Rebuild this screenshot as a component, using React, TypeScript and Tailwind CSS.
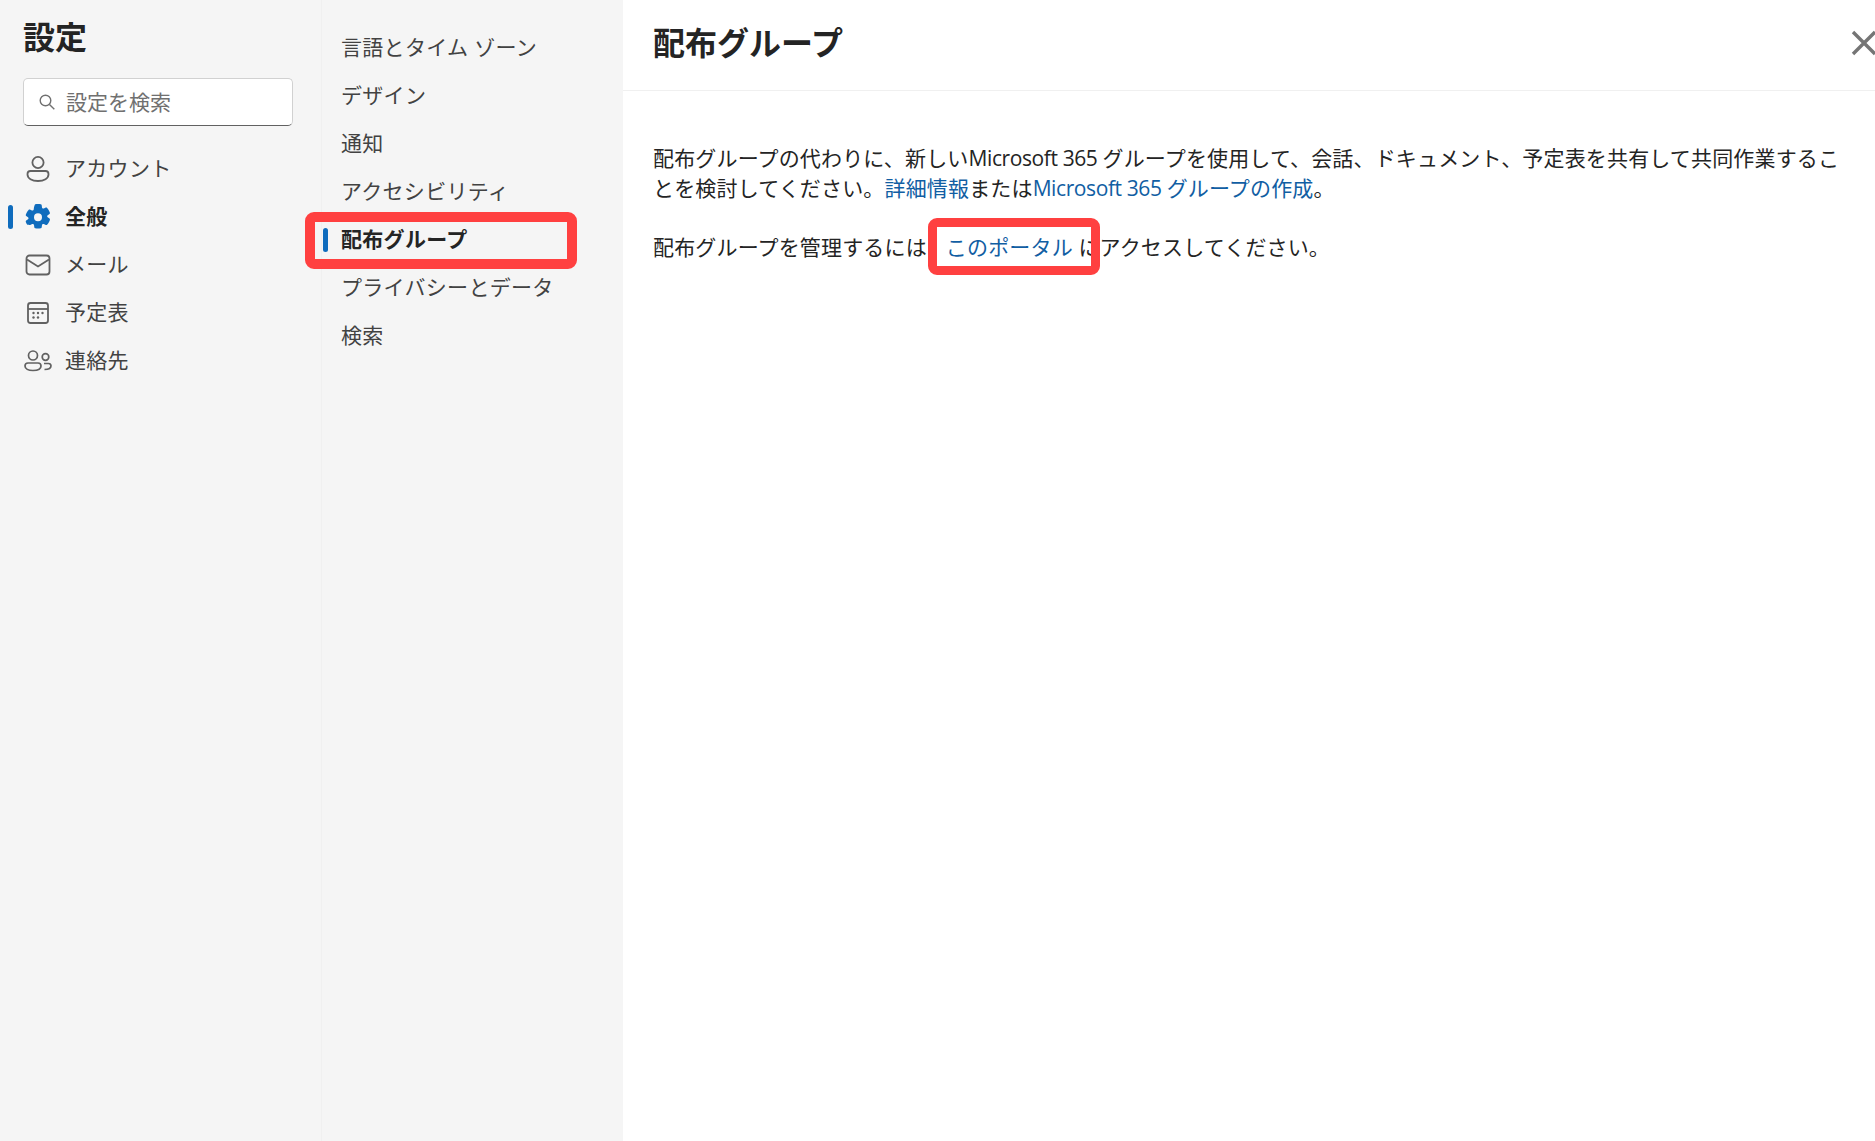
const font = "font-['Open_Sans','Noto_Sans_CJK_JP',sans-serif]";

function PersonIcon() {
  return (
    <svg width="28" height="28" viewBox="0 0 28 28" fill="none" stroke="#616161" strokeWidth="1.8">
      <circle cx="14" cy="7.5" r="5.6" />
      <path d="M6.5 16h15a3 3 0 0 1 3 3v.5c0 3.8-4.4 6.5-10.5 6.5S3.500 23.300 3.500 19.500V19a3 3 0 0 1 3-3z" />
    </svg>
  );
}
function GearIcon() {
  return (
    <svg width="28" height="28" viewBox="0 0 28 28">
      <path
        fill="#0f6cbd"
        fillRule="evenodd"
        d="M11.2 1.300c1.800-.4 3.800-.4 5.600 0 .5.100.8.500.9 1l.3 2.200c.1.800 1 1.300 1.800 1l2-.9c.5-.2 1-.1 1.300.3 1.300 1.300 2.200 3 2.800 4.800.1.500 0 1-.4 1.300l-1.800 1.300c-.7.500-.7 1.500 0 2l1.800 1.300c.4.300.6.800.4 1.300-.6 1.800-1.500 3.500-2.800 4.800-.3.400-.8.500-1.300.3l-2-.9c-.8-.3-1.700.2-1.800 1l-.3 2.200c-.1.500-.4.900-.9 1-1.800.4-3.800.4-5.600 0-.5-.1-.8-.5-.9-1l-.3-2.200c-.1-.8-1-1.300-1.800-1l-2 .9c-.5.200-1 .1-1.300-.3C3.300 22.400 2.400 20.700 1.800 18.900c-.2-.5 0-1 .4-1.300L4 16.300c.7-.5.7-1.500 0-2l-1.800-1.300c-.4-.3-.5-.8-.4-1.300C2.400 9.900 3.300 8.200 4.600 6.900c.3-.4.800-.5 1.300-.3l2 .9c.8.300 1.700-.2 1.800-1l.3-2.200c.1-.5.700-2.500 1.200-3zM14 10.300a4 4 0 1 0 0 8 4 4 0 0 0 0-8z"
      />
    </svg>
  );
}
function MailIcon() {
  return (
    <svg width="28" height="28" viewBox="0 0 28 28" fill="none" stroke="#616161" strokeWidth="1.8">
      <rect x="2.500" y="4.500" width="23" height="19" rx="3" />
      <path d="M3 8.500l11 7 11-7" />
    </svg>
  );
}
function CalendarIcon() {
  return (
    <svg width="28" height="28" viewBox="0 0 28 28" fill="none" stroke="#616161" strokeWidth="1.800">
      <rect x="4" y="4" width="20" height="20" rx="2.500" />
      <path d="M4 10h20" />
      <g fill="#616161" stroke="none">
        <circle cx="9.500" cy="14" r="1.200" />
        <circle cx="14" cy="14" r="1.200" />
        <circle cx="18.500" cy="14" r="1.200" />
        <circle cx="9.500" cy="18.500" r="1.200" />
        <circle cx="14" cy="18.500" r="1.200" />
      </g>
    </svg>
  );
}
function ContactsIcon() {
  return (
    <svg width="28" height="28" viewBox="0 0 28 28" fill="none" stroke="#616161" strokeWidth="1.700">
      <circle cx="9" cy="8.500" r="4.500" />
      <path d="M4 16h10a3 3 0 0 1 3 3c0 3-3.200 4.500-8 4.500S1 22 1 19a3 3 0 0 1 3-3z" />
      <circle cx="21.500" cy="10" r="3.300" />
      <path d="M20 16.500h4.500a2.500 2.500 0 0 1 2.500 2.300c0 2.200-2.200 3.700-6.500 3.700" />
    </svg>
  );
}

const primary = [
  { label: "アカウント", icon: <PersonIcon /> },
  { label: "全般", icon: <GearIcon />, active: true },
  { label: "メール", icon: <MailIcon /> },
  { label: "予定表", icon: <CalendarIcon /> },
  { label: "連絡先", icon: <ContactsIcon /> },
];

const secondary = [
  { label: "言語とタイム ゾーン" },
  { label: "デザイン" },
  { label: "通知" },
  { label: "アクセシビリティ" },
  { label: "配布グループ", active: true },
  { label: "プライバシーとデータ" },
  { label: "検索" },
];

export default function App() {
  return (
    <div className={`relative flex h-[1141px] w-[1875px] overflow-hidden bg-white text-[21px] ${font}`}>
      <aside className="flex w-[322px] shrink-0 flex-col border-r border-[#f0f0f0] bg-[#f5f5f5]">
        <h1 className="mt-[16px] ml-[23px] text-[32px] leading-[42px] font-bold text-[#242424]">設定</h1>
        <div className="mt-[20px] ml-[23px] flex h-12 w-[270px] items-center rounded-[5px] border border-[#d1d1d1] border-b-[#616161] bg-white pl-[15px]">
          <svg width="16" height="16" viewBox="0 0 16 16" fill="none" stroke="#707070" strokeWidth="1.400">
            <circle cx="6.500" cy="6.500" r="5.300" />
            <path d="M10.500 10.500l4.800 4.800" />
          </svg>
          <span className="mt-[2px] ml-[11px] text-[#707070]">設定を検索</span>
        </div>
        <nav className="mt-[19px] flex flex-col tracking-[0.3px]">
          {primary.map((item) => (
            <div key={item.label} className="relative flex h-12 items-center pl-6">
              {item.active && <span className="absolute top-3 left-2 h-6 w-[5px] rounded-full bg-[#0f6cbd]" />}
              {item.icon}
              <span className={`ml-[13px] ${item.active ? "font-bold text-[#242424]" : "text-[#424242]"}`}>
                {item.label}
              </span>
            </div>
          ))}
        </nav>
      </aside>

      <div className="flex w-[301px] shrink-0 flex-col bg-[#f5f5f5] pt-[24px] tracking-[0.3px]">
        {secondary.map((item) => (
          <div key={item.label} className="relative flex h-12 items-center pl-[19px]">
            {item.active && <span className="absolute top-3 left-[1px] h-6 w-[5px] rounded-full bg-[#0f6cbd]" />}
            <span className={item.active ? "font-bold text-[#242424]" : "text-[#424242]"}>{item.label}</span>
          </div>
        ))}
      </div>

      <main className="min-w-0 flex-1">
        <header className="flex h-[91px] items-center justify-between border-b border-[#f0f0f0] pb-1 pl-[30px]">
          <h2 className="text-[32px] font-bold text-[#242424]">配布グループ</h2>
          <svg className="mr-[-2px] shrink-0" width="26" height="26" viewBox="0 0 26 26" fill="none" stroke="#757575" strokeWidth="3.400">
            <path d="M2 2l22 22M24 2L2 24" />
          </svg>
        </header>
        <div className="pt-[52px] pr-[30px] pl-[30px] leading-[30px] tracking-[0.16px] text-[#242424]">
          <p>
            配布グループの代わりに、新しい<span className="tracking-[-0.4px]">Microsoft 365 </span>グループを使用して、会話、ドキュメント、予定表を共有して共同作業することを検討してください。
            <a className="text-[#115ea3]">詳細情報</a>または<a className="text-[#115ea3]"><span className="tracking-[-0.4px]">Microsoft 365 </span>グループの作成</a>。
          </p>
          <p className="mt-[29px]">
            配布グループを管理するには<a className="ml-[19px] text-[#115ea3]">このポータル</a> にアクセスしてください。
          </p>
        </div>
      </main>

      <div className="absolute top-[212px] left-[305px] h-[57px] w-[272px] rounded-[9px] border-[10px] border-[#ff4040]" />
      <div className="absolute top-[218px] left-[928px] h-[57px] w-[172px] rounded-[9px] border-[9px] border-[#ff4040]" />
    </div>
  );
}
